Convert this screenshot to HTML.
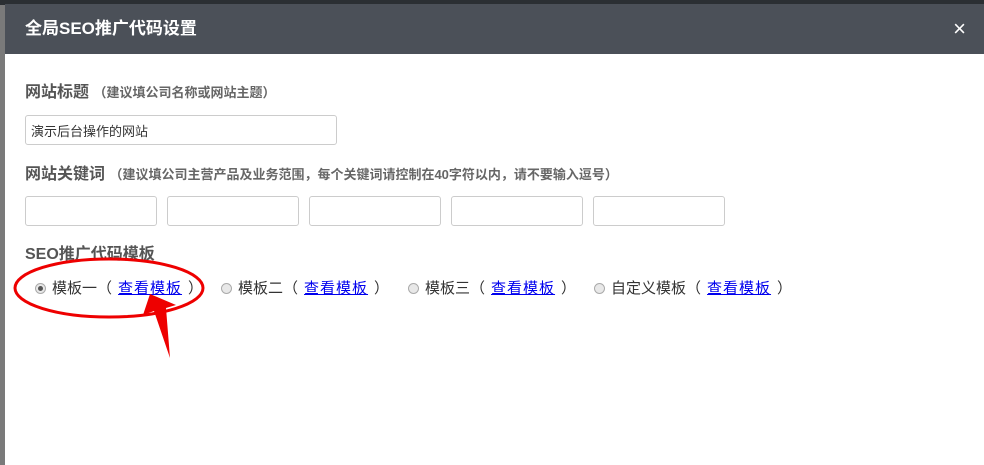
<!DOCTYPE html>
<html><head><meta charset="utf-8"><style>
body{margin:0;width:984px;height:465px;overflow:hidden;background:#7a7a7a;font-family:"Liberation Sans","Noto Sans CJK SC",sans-serif;position:relative}
.top{position:absolute;left:0;top:0;width:984px;height:5px;background:#2b2f33}
.dlg{position:absolute;left:5px;top:4px;width:979px;height:461px;background:#fff}
.hd{height:50px;background:#4b5058;color:#fff;font-size:17px;font-weight:bold;line-height:50px;padding-left:20px;position:relative}
.x{position:absolute;right:18px;top:0;font-weight:normal;font-size:22px;font-family:"Liberation Sans",sans-serif}
.lbl{position:absolute;left:20px;font-size:16px;font-weight:bold;color:#555}
.lbl span{font-size:13px;font-weight:bold;color:#666}
input{position:absolute;border:1px solid #ccc;border-radius:3px;height:28px;box-sizing:border-box;font-size:13px;padding-left:5px;color:#333;font-family:inherit}
.r{position:absolute;top:273px;font-size:15px;color:#333;white-space:nowrap}
.r i{display:inline-block;width:11px;height:11px;border:1px solid #aaa;border-radius:50%;background:#e8e8e8;vertical-align:-1px;margin-right:6px;position:relative;box-sizing:border-box}
.r i.on:after{content:"";position:absolute;left:2px;top:2px;width:5px;height:5px;border-radius:50%;background:#555}
.r a{color:#00e;text-decoration:underline;letter-spacing:1px;margin:0 6px 0 6px}
</style></head><body>
<div class="top"></div>
<div class="dlg">
<div class="hd">全局SEO推广代码设置<span class="x">×</span></div>
<div class="lbl" style="top:74px">网站标题 <span>（建议填公司名称或网站主题）</span></div>
<input style="left:20px;top:111px;width:312px;height:30px" value="演示后台操作的网站">
<div class="lbl" style="top:156px">网站关键词 <span>（建议填公司主营产品及业务范围，每个关键词请控制在40字符以内，请不要输入逗号）</span></div>
<input style="left:20px;top:192px;width:132px;height:30px">
<input style="left:162px;top:192px;width:132px;height:30px">
<input style="left:304px;top:192px;width:132px;height:30px">
<input style="left:446px;top:192px;width:132px;height:30px">
<input style="left:588px;top:192px;width:132px;height:30px">
<div class="lbl" style="top:236px">SEO推广代码模板</div>
<div class="r" style="left:30px"><i class="on"></i>模板一（<a>查看模板</a>）</div>
<div class="r" style="left:216px"><i></i>模板二（<a>查看模板</a>）</div>
<div class="r" style="left:403px"><i></i>模板三（<a>查看模板</a>）</div>
<div class="r" style="left:589px"><i></i>自定义模板（<a>查看模板</a>）</div>
</div>
<svg style="position:absolute;left:0;top:0" width="984" height="465">
<ellipse cx="109" cy="288" rx="94" ry="29" fill="none" stroke="#e00" stroke-width="3"/>
<polygon points="150,294 143,315 154,311 170,358 166,308 176,305" fill="#e00"/>
</svg>
</body></html>
